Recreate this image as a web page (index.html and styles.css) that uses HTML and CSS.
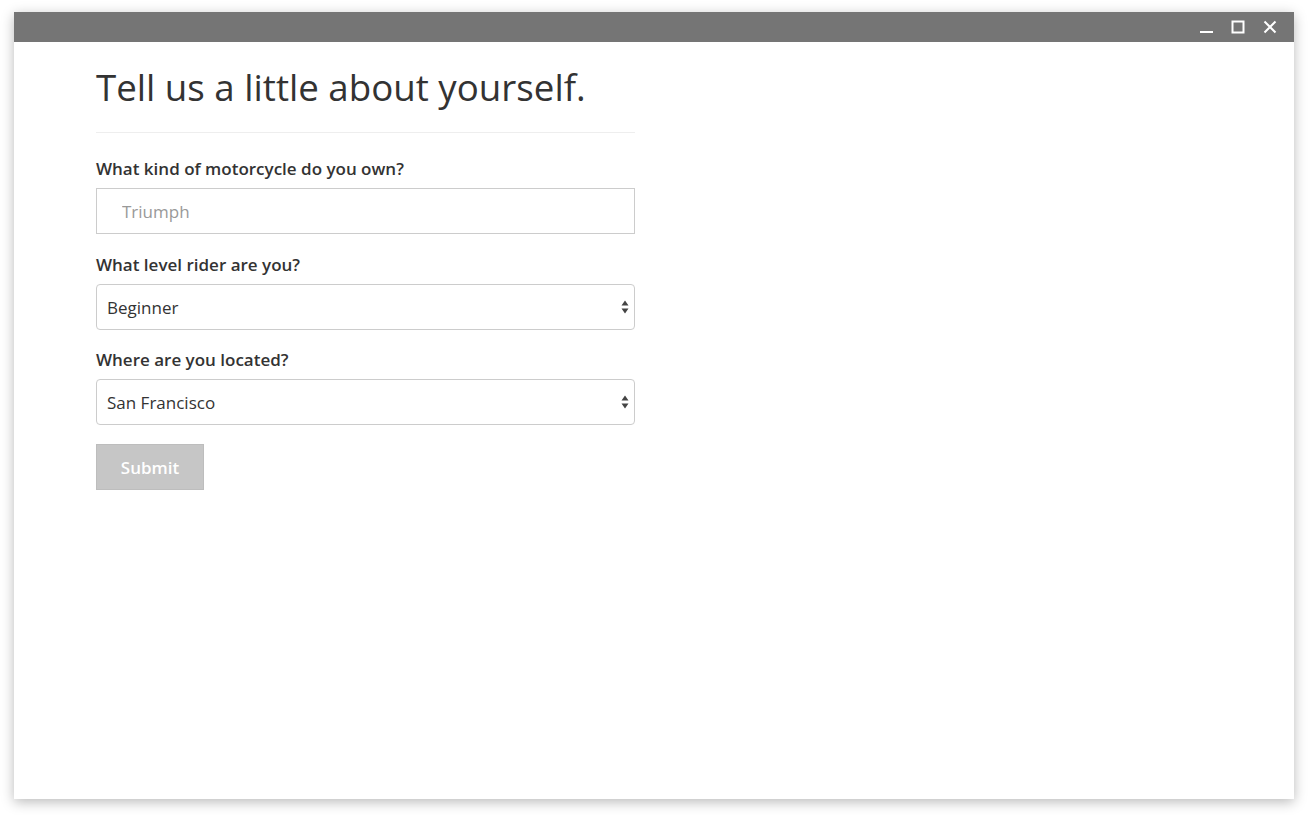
FILE: index.html
```html
<!DOCTYPE html>
<html>
<head>
<meta charset="utf-8">
<link rel="stylesheet" href="styles.css">
</head>
<body>
<div class="page">
  <div class="window">
    <div class="titlebar">
      <div class="controls">
        <svg class="ctl" width="14" height="14" viewBox="0 0 14 14"><rect x="1" y="11" width="13" height="2" fill="#fff"/></svg>
        <svg class="ctl" width="14" height="14" viewBox="0 0 14 14"><rect x="1.5" y="1.5" width="11" height="11" fill="none" stroke="#fff" stroke-width="2"/></svg>
        <svg class="ctl" width="14" height="14" viewBox="0 0 14 14"><path d="M1.5 1.5 L12.5 12.5 M12.5 1.5 L1.5 12.5" stroke="#fff" stroke-width="2"/></svg>
      </div>
    </div>
    <div class="content">
      <h1 class="title">Tell us a little about yourself.</h1>
      <div class="divider"></div>
      <form class="form">
        <div class="group first">
          <label class="label">What kind of motorcycle do you own?</label>
          <input class="input" type="text" placeholder="Triumph">
        </div>
        <div class="group">
          <label class="label">What level rider are you?</label>
          <div class="select-wrap">
            <select class="select"><option>Beginner</option></select>
            <svg class="arrows" width="8" height="14" viewBox="0 0 8 14"><path d="M4 0.5 L7.5 5.5 L0.5 5.5 Z M0.5 8.5 L7.5 8.5 L4 13.5 Z" fill="#444"/></svg>
          </div>
        </div>
        <div class="group">
          <label class="label">Where are you located?</label>
          <div class="select-wrap">
            <select class="select"><option>San Francisco</option></select>
            <svg class="arrows" width="8" height="14" viewBox="0 0 8 14"><path d="M4 0.5 L7.5 5.5 L0.5 5.5 Z M0.5 8.5 L7.5 8.5 L4 13.5 Z" fill="#444"/></svg>
          </div>
        </div>
        <button class="submit" type="button">Submit</button>
      </form>
    </div>
  </div>
</div>
</body>
</html>
```

FILE: styles.css
```css
html, body {
  margin: 0;
  padding: 0;
  background: #fff;
}
body {
  font-family: "Open Sans", "Liberation Sans", sans-serif;
  color: #333;
}
.page {
  padding: 12px 14px 16px 14px;
  height: 815px;
  box-sizing: border-box;
}
.window {
  width: 1280px;
  height: 787px;
  background: #fff;
  box-shadow: 0 3px 12px rgba(0,0,0,0.28);
  display: flex;
  flex-direction: column;
}
.titlebar {
  height: 30px;
  background: #757575;
  display: flex;
  justify-content: flex-end;
  align-items: center;
  padding-right: 17px;
}
.controls {
  display: flex;
  gap: 18px;
  align-items: center;
}
.ctl {
  display: block;
}
.content {
  padding: 23px 82px 0 82px;
}
.title {
  margin: 0;
  font-size: 36.7px;
  font-weight: 400;
  line-height: 44px;
  color: #333;
}
.divider {
  width: 539px;
  height: 1px;
  background: #eee;
  margin-top: 23px;
  margin-bottom: 25px;
}
.form {
  width: 539px;
  display: flex;
  flex-direction: column;
}
.group {
  display: flex;
  flex-direction: column;
  margin-bottom: 19px;
}
.group.first {
  margin-bottom: 20px;
}
.label {
  font-size: 17px;
  font-weight: 600;
  line-height: 22px;
  margin-bottom: 8px;
  color: #333;
}
.input {
  height: 46px;
  box-sizing: border-box;
  border: 1px solid #ccc;
  border-radius: 0;
  padding: 0 25px;
  font-family: inherit;
  font-size: 17px;
  color: #333;
  outline: none;
}
.input::placeholder {
  color: #999;
}
.select-wrap {
  position: relative;
}
.select {
  width: 100%;
  height: 46px;
  box-sizing: border-box;
  border: 1px solid #ccc;
  border-radius: 4px;
  background: #fff;
  padding: 0 10px;
  font-family: inherit;
  font-size: 17px;
  color: #333;
  appearance: none;
  -webkit-appearance: none;
  outline: none;
}
.arrows {
  position: absolute;
  right: 6px;
  top: 16px;
}
.submit {
  align-self: flex-start;
  width: 108px;
  height: 46px;
  background: #c6c6c6;
  border: 1px solid #bdbdbd;
  color: #fff;
  font-family: inherit;
  font-size: 17px;
  font-weight: 600;
  padding: 0;
}
```
